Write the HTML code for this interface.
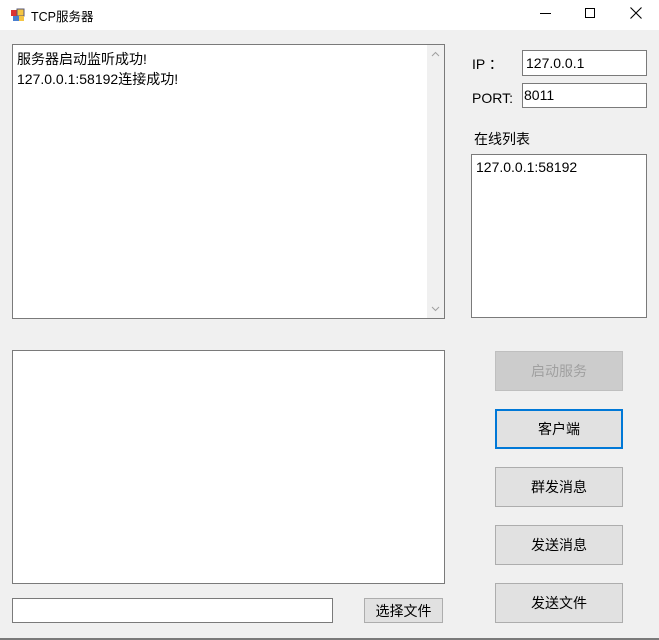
<!DOCTYPE html>
<html><head><meta charset="utf-8"><style>
*{margin:0;padding:0;box-sizing:border-box}
body{width:659px;height:640px;background:#f0f0f0;position:relative;overflow:hidden;font-family:"Liberation Sans","Noto Sans CJK SC",sans-serif;font-size:14px;color:#000}
.a{position:absolute}
.tb{left:0;top:0;width:659px;height:30px;background:#fff}
.box{background:#fff;border:1px solid #7a7a7a}
.btn{background:#e1e1e1;border:1px solid #adadad;display:flex;align-items:center;justify-content:center}
</style></head><body>
<div class="a tb">
 <svg class="a" style="left:10px;top:7px" width="16" height="16"><rect x="1" y="3" width="6" height="6" fill="#d33"/><rect x="7" y="2" width="7" height="7" fill="#f5c542" stroke="#557" stroke-width="1"/><rect x="3" y="9" width="6" height="5" fill="#4a7fd0"/><rect x="9" y="9" width="5" height="5" fill="#f5c542"/></svg>
 <div class="a" style="left:31px;top:6px;font-size:12.5px">TCP服务器</div>
 <div class="a" style="left:540px;top:13px;width:11px;height:1px;background:#000"></div>
 <div class="a" style="left:585px;top:8px;width:10px;height:10px;border:1px solid #000"></div>
 <svg class="a" style="left:630px;top:7px" width="12" height="12"><path d="M0.5 0.5L11.5 11.5M11.5 0.5L0.5 11.5" stroke="#000" stroke-width="1.1"/></svg>
</div>
<div class="a box" style="left:12px;top:44px;width:433px;height:275px">
 <div class="a" style="left:4px;top:4px;line-height:20px">服务器启动监听成功!<br>127.0.0.1:58192连接成功!</div>
 <div class="a" style="right:0;top:0;width:17px;height:273px;background:#f0f0f0"></div>
 <svg class="a" style="right:4px;top:6px" width="9" height="6"><path d="M1 5L4.5 1.5L8 5" stroke="#a0a0a0" fill="none"/></svg>
 <svg class="a" style="right:4px;bottom:6px" width="9" height="6"><path d="M1 1L4.5 4.5L8 1" stroke="#a0a0a0" fill="none"/></svg>
</div>
<div class="a" style="left:472px;top:54px">IP ：</div>
<div class="a box" style="left:522px;top:50px;width:125px;height:26px"><span class="a" style="left:3px;top:4px">127.0.0.1</span></div>
<div class="a" style="left:472px;top:90px">PORT:</div>
<div class="a box" style="left:522px;top:83px;width:125px;height:25px"><span class="a" style="left:1px;top:3px">8011</span></div>
<div class="a" style="left:474px;top:129px">在线列表</div>
<div class="a box" style="left:471px;top:154px;width:176px;height:164px"><span class="a" style="left:4px;top:4px">127.0.0.1:58192</span></div>
<div class="a box" style="left:12px;top:350px;width:433px;height:234px"></div>
<div class="a box" style="left:12px;top:598px;width:321px;height:25px"></div>
<div class="a btn" style="left:364px;top:598px;width:79px;height:25px">选择文件</div>
<div class="a btn" style="left:495px;top:351px;width:128px;height:40px;background:#cccccc;border-color:#bfbfbf;color:#a0a0a0">启动服务</div>
<div class="a btn" style="left:495px;top:409px;width:128px;height:40px;border:2px solid #0078d7">客户端</div>
<div class="a btn" style="left:495px;top:467px;width:128px;height:40px">群发消息</div>
<div class="a btn" style="left:495px;top:525px;width:128px;height:40px">发送消息</div>
<div class="a btn" style="left:495px;top:583px;width:128px;height:40px">发送文件</div>
<div class="a" style="left:0;top:638px;width:659px;height:2px;background:#7a7a7a"></div>
</body></html>
